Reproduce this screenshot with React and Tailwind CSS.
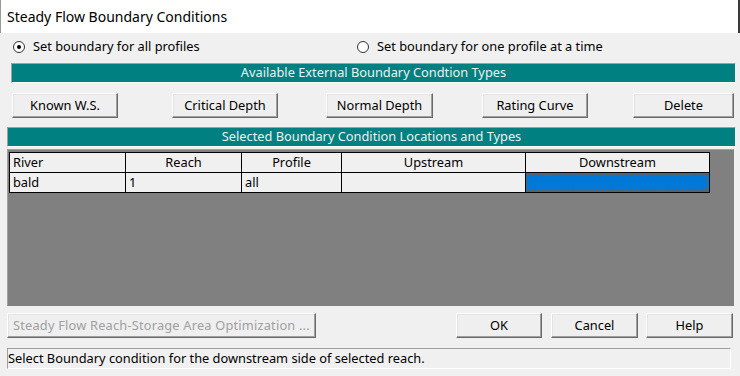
export default function App() {
  const btn =
    "h-[25px] bg-[#efefef] border border-t-white border-l-white border-r-[#696969] border-b-[#696969] shadow-[inset_-1px_-1px_0_#a0a0a0,inset_1px_1px_0_#e3e3e3] flex items-center justify-center text-[12.8px] text-black";
  const teal =
    "h-[20px] bg-[#008080] border border-t-[#a0a0a0] border-l-[#a0a0a0] border-r-white border-b-white flex items-center justify-center text-[12.8px] text-[#f0f0f0]";
  const cellH = "h-[20px] border-r border-b border-black bg-[#f0f0f0] flex items-center text-[12.8px] text-black";
  return (
    <div className="w-[740px] h-[376px] bg-[#f0f0f0] overflow-hidden flex flex-col" style={{ fontFamily: '"Noto Sans", "Open Sans", sans-serif' }}>
      <div className="h-[33px] bg-white flex items-center pl-[6px] border-l border-[#9a9a9a] border-r-2 border-r-[#3a3a3a] text-[14px] text-black shrink-0">
        Steady Flow Boundary Conditions
      </div>
      <div className="h-[27px] flex items-center text-[12.8px] text-black shrink-0 pt-[1px]">
        <div className="ml-[13px] w-[12px] h-[12px] rounded-full border border-[#333] bg-white flex items-center justify-center">
          <div className="w-[4px] h-[4px] rounded-full bg-black" />
        </div>
        <span className="ml-[8px] w-[166px] whitespace-nowrap">Set boundary for all profiles</span>
        <div className="ml-[158px] w-[12px] h-[12px] rounded-full border border-[#333] bg-white" />
        <span className="ml-[8px] whitespace-nowrap">Set boundary for one profile at a time</span>
      </div>
      <div className={teal + " ml-[11px] w-[725px] mt-[3px] shrink-0"}>Available External Boundary Condtion Types</div>
      <div className="flex mt-[10px] shrink-0">
        <div className={btn + " ml-[12px] w-[106px]"}>Known W.S.</div>
        <div className={btn + " ml-[54px] w-[106px]"}>Critical Depth</div>
        <div className={btn + " ml-[48px] w-[107px]"}>Normal Depth</div>
        <div className={btn + " ml-[49px] w-[106px]"}>Rating Curve</div>
        <div className={btn + " ml-[45px] w-[101px]"}>Delete</div>
      </div>
      <div className={teal + " ml-[7px] w-[729px] mt-[9px] shrink-0"}>Selected Boundary Condition Locations and Types</div>
      <div className="ml-[7px] w-[727px] h-[157px] mt-[2px] bg-[#808080] border-t border-l border-[#a0a0a0] pl-[1px] pt-[2px] shrink-0">
        <div className="flex border-t border-l border-black w-[701px]">
          <div className={cellH + " w-[116px] pl-[3px]"}>River</div>
          <div className={cellH + " w-[116px] justify-center"}>Reach</div>
          <div className={cellH + " w-[100px] justify-center"}>Profile</div>
          <div className={cellH + " w-[184px] justify-center"}>Upstream</div>
          <div className={cellH + " w-[184px] justify-center"}>Downstream</div>
        </div>
        <div className="flex border-l border-black w-[701px]">
          <div className={cellH + " w-[116px] pl-[3px]"}>bald</div>
          <div className={cellH + " w-[116px] pl-[3px]"}>1</div>
          <div className={cellH + " w-[100px] pl-[3px]"}>all</div>
          <div className={cellH + " w-[184px]"}></div>
          <div className="w-[184px] h-[20px] border-r border-b border-black bg-[#0078d7] p-[1px]">
            <div className="w-full h-full border border-dashed border-[#7a5a3a]" />
          </div>
        </div>
      </div>
      <div className="flex mt-[7px] shrink-0">
        <div className={btn + " ml-[7px] w-[309px] justify-start pl-[5px]"}>
          <span className="text-[#a0a0a0] whitespace-nowrap tracking-[0.2px]">Steady Flow Reach-Storage Area Optimization ...</span>
        </div>
        <div className={btn + " ml-[140px] w-[86px]"}>OK</div>
        <div className={btn + " ml-[9px] w-[87px]"}>Cancel</div>
        <div className={btn + " ml-[8px] w-[87px]"}>Help</div>
      </div>
      <div className="ml-[7px] w-[724px] h-[21px] mt-[10px] border border-t-[#a0a0a0] border-l-[#a0a0a0] border-r-white border-b-white flex items-center text-[12.8px] text-black shrink-0 whitespace-nowrap">
        Select Boundary condition for the downstream side of selected reach.
      </div>
    </div>
  );
}
